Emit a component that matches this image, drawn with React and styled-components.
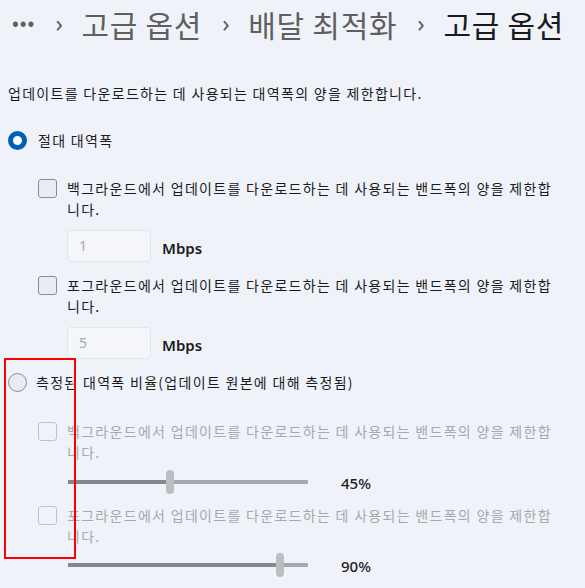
import React from 'react';
import styled, { createGlobalStyle } from 'styled-components';

const GlobalStyle = createGlobalStyle`
	html, body {
		margin: 0;
		padding: 0;
		background: #eff3f9;
	}
	body {
		font-family: 'Noto Sans CJK KR', 'Noto Sans', sans-serif;
		color: #1b1b1b;
	}
`;

const Page = styled.main`
	position: relative;
	width: 585px;
	height: 588px;
	overflow: hidden;
	padding: 0 0 0 8px;
	box-sizing: border-box;
`;

const Breadcrumb = styled.nav`
	display: flex;
	align-items: center;
	height: 48px;
	white-space: nowrap;
	font-size: 30px;
	letter-spacing: 0.7px;
	line-height: 1;
	color: #5f5f5f;
	.dots {
		font-size: 20px;
		letter-spacing: 1px;
		margin: -4px 0 0 4px;
	}
	.sep {
		font-family: 'Noto Sans', sans-serif;
		font-size: 24px;
		margin: -2px 18px 0 20px;
	}
	.current {
		color: #1a1a1a;
	}
`;

const Description = styled.p`
	margin: 35px 0 0;
	font-size: 14px;
	line-height: 21px;
	letter-spacing: 1.3px;
`;

const RadioRow = styled.label`
	display: flex;
	align-items: center;
	gap: ${(p) => p.$gap || 11}px;
	height: 20px;
	margin-top: ${(p) => p.$top}px;
	font-size: 14px;
	letter-spacing: 1.3px;
`;

const Radio = styled.span`
	width: 19px;
	height: 19px;
	box-sizing: border-box;
	border-radius: 50%;
	flex: none;
	background: ${(p) => (p.$checked ? '#ffffff' : '#e8ebf0')};
	border: ${(p) => (p.$checked ? '5px solid #0060b9' : '1px solid #8b8d91')};
`;

const Option = styled.div`
	display: flex;
	gap: 10px;
	padding-left: 30px;
	margin-top: ${(p) => p.$top}px;
	color: ${(p) => (p.$disabled ? '#a6a8ab' : 'inherit')};
`;

const Checkbox = styled.span`
	width: 19px;
	height: 19px;
	box-sizing: border-box;
	flex: none;
	border-radius: 3px;
	border: 1px solid ${(p) => (p.$disabled ? '#bfc1c5' : '#8a8c90')};
	background: ${(p) => (p.$disabled ? 'transparent' : '#e9ecf1')};
`;

const OptionText = styled.div`
	width: 490px;
	font-size: 14px;
	line-height: 21px;
	letter-spacing: 1.3px;
	margin-top: -1px;
`;

const ValueRow = styled.div`
	display: flex;
	align-items: center;
	gap: 11px;
	height: ${(p) => (p.$slider ? '22px' : 'auto')};
	padding-left: 59px;
	margin-top: ${(p) => p.$top}px;
`;

const NumberInput = styled.div`
	width: 84px;
	height: 32px;
	box-sizing: border-box;
	border: 1px solid #e1e4e9;
	border-radius: 4px;
	background: #f4f6fa;
	color: #a7a9ad;
	font-family: 'Noto Sans', sans-serif;
	font-size: 14px;
	line-height: 30px;
	padding-left: 11px;
`;

const Unit = styled.span`
	font-family: 'Noto Sans', sans-serif;
	font-weight: 600;
	font-size: 15px;
	color: #1b1b1b;
	margin-top: 4px;
`;

const SliderTrack = styled.div`
	position: relative;
	width: 240px;
	height: 4px;
	margin-left: 1px;
	background: #a5a7ab;
	border-radius: 1px;
`;

const SliderFill = styled.div`
	height: 100%;
	background: #85878b;
`;

const SliderThumb = styled.div`
	position: absolute;
	top: -10px;
	width: 8px;
	height: 24px;
	margin-left: -4px;
	border-radius: 4px;
	background: #bbbdc2;
`;

const Percent = styled.span`
	font-family: 'Noto Sans', sans-serif;
	font-weight: 500;
	font-size: 15px;
	color: #1b1b1b;
	margin-left: 22px;
	margin-top: 2px;
`;

const Highlight = styled.div`
	position: absolute;
	left: 4px;
	top: 358px;
	width: 72px;
	height: 201px;
	box-sizing: border-box;
	border: 2px solid #ff0000;
	pointer-events: none;
`;

const LIMIT_BG =
	'백그라운드에서 업데이트를 다운로드하는 데 사용되는 밴드폭의 양을 제한합니다.';
const LIMIT_FG =
	'포그라운드에서 업데이트를 다운로드하는 데 사용되는 밴드폭의 양을 제한합니다.';

function Slider({ value }) {
	return (
		<SliderTrack>
			<SliderFill style={{ width: `${value}%` }} />
			<SliderThumb style={{ left: `${value}%` }} />
		</SliderTrack>
	);
}

export default function App() {
	return (
		<>
			<GlobalStyle />
			<Page>
				<Breadcrumb>
					<span className="dots">•••</span>
					<span className="sep">›</span>
					<span>고급 옵션</span>
					<span className="sep">›</span>
					<span>배달 최적화</span>
					<span className="sep">›</span>
					<span className="current">고급 옵션</span>
				</Breadcrumb>

				<Description>
					업데이트를 다운로드하는 데 사용되는 대역폭의 양을 제한합니다.
				</Description>

				<RadioRow $top={26}>
					<Radio $checked />
					<span>절대 대역폭</span>
				</RadioRow>

				<Option $top={29}>
					<Checkbox />
					<OptionText>{LIMIT_BG}</OptionText>
				</Option>
				<ValueRow $top={10}>
					<NumberInput>1</NumberInput>
					<Unit>Mbps</Unit>
				</ValueRow>

				<Option $top={14}>
					<Checkbox />
					<OptionText>{LIMIT_FG}</OptionText>
				</Option>
				<ValueRow $top={10}>
					<NumberInput>5</NumberInput>
					<Unit>Mbps</Unit>
				</ValueRow>

				<RadioRow $top={13} $gap={9}>
					<Radio />
					<span>측정된 대역폭 비율(업데이트 원본에 대해 측정됨)</span>
				</RadioRow>

				<Option $top={30} $disabled>
					<Checkbox $disabled />
					<OptionText>{LIMIT_BG}</OptionText>
				</Option>
				<ValueRow $top={8} $slider>
					<Slider value={42.5} />
					<Percent>45%</Percent>
				</ValueRow>

				<Option $top={13} $disabled>
					<Checkbox $disabled />
					<OptionText>{LIMIT_FG}</OptionText>
				</Option>
				<ValueRow $top={7} $slider>
					<Slider value={88.3} />
					<Percent>90%</Percent>
				</ValueRow>

				<Highlight />
			</Page>
		</>
	);
}
